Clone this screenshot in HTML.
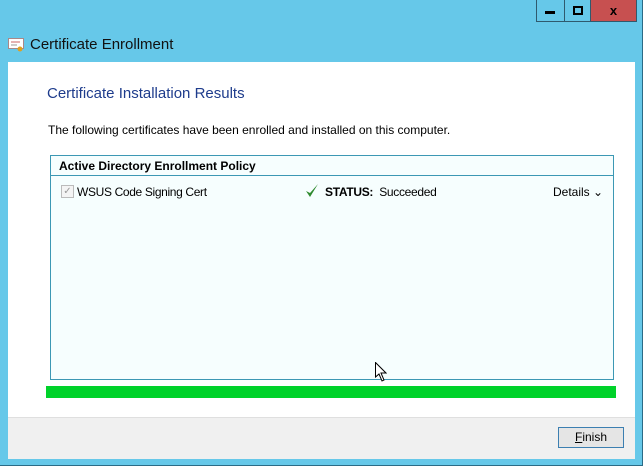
<html><head><style>
body{margin:0;width:643px;height:466px;background:#66c8e9;position:relative;overflow:hidden;font-family:"Liberation Sans",sans-serif;font-size:12px;color:#000}
.a{position:absolute}
</style></head><body>
<div class="a" style="left:0;top:0;width:642px;height:465px;border-right:1px solid #2b6b86;border-bottom:1px solid #2b6b86"></div>
<div class="a" style="left:536px;top:0;width:27px;height:21px;border:1px solid #2f5a6e;border-top:0;background:#66c8e9"></div>
<div class="a" style="left:545px;top:11px;width:10px;height:3px;background:#000"></div>
<div class="a" style="left:564px;top:0;width:26px;height:21px;border:1px solid #2f5a6e;border-top:0;border-left:0"></div>
<div class="a" style="left:573px;top:6px;width:6px;height:5px;border:2px solid #000"></div>
<div class="a" style="left:591px;top:0;width:45px;height:21px;background:#c75050;border:1px solid #2f5a6e;border-top:0;border-left:0;text-align:center;font-weight:bold;font-size:13px;line-height:21px">x</div>
<svg class="a" style="left:8px;top:38px" width="16" height="14"><rect x="0.5" y="0.5" width="15" height="10" fill="#fff" stroke="#a88"/><line x1="3" y1="4" x2="12" y2="4" stroke="#c66"/><line x1="3" y1="7" x2="9" y2="7" stroke="#999"/><circle cx="12" cy="11" r="2.5" fill="#e0a020"/></svg>
<div class="a" style="left:30px;top:36px;font-size:15px;color:#111">Certificate Enrollment</div>
<div class="a" style="left:8px;top:62px;width:627px;height:355px;background:#fff"></div>
<div class="a" style="left:8px;top:417px;width:627px;height:41px;background:#f0f0f0;border-top:1px solid #dfdfdf"></div>
<div class="a" style="left:47px;top:85px;font-size:15px;color:#1e3c8c">Certificate Installation Results</div>
<div class="a" style="left:48px;top:123px">The following certificates have been enrolled and installed on this computer.</div>
<div class="a" style="left:50px;top:155px;width:562px;height:223px;border:1px solid #3c98b4;background:#f6fefe"></div>
<div class="a" style="left:51px;top:175px;width:562px;height:1px;background:#3c98b4"></div>
<div class="a" style="left:59px;top:159px;font-weight:bold">Active Directory Enrollment Policy</div>
<div class="a" style="left:61px;top:185px;width:11px;height:11px;border:1px solid #bbb;background:#f4f4f4;color:#999;font-size:10px;line-height:11px;text-align:center">✓</div>
<div class="a" style="left:77px;top:185px;letter-spacing:-0.35px">WSUS Code Signing Cert</div>
<svg class="a" style="left:305px;top:183px" width="14" height="15"><path d="M1 8 L5 14 L13 1 L5 10 Z" fill="#2e8a2e"/></svg>
<div class="a" style="left:325px;top:185px;letter-spacing:-0.3px"><b>STATUS:</b>&nbsp; Succeeded</div>
<div class="a" style="left:553px;top:185px">Details ⌄</div>
<div class="a" style="left:46px;top:386px;width:570px;height:12px;background:#00d22a"></div>
<svg class="a" style="left:375px;top:362px" width="12" height="20"><path d="M0.5 0.5 L0.5 15 L4 12 L7 19 L9 18 L6 11 L11 11 Z" fill="#fff" stroke="#000"/></svg>
<div class="a" style="left:558px;top:427px;width:64px;height:19px;border:1px solid #3c7fb1;background:#e5e5e5;text-align:center;line-height:19px"><u>F</u>inish</div>
</body></html>
